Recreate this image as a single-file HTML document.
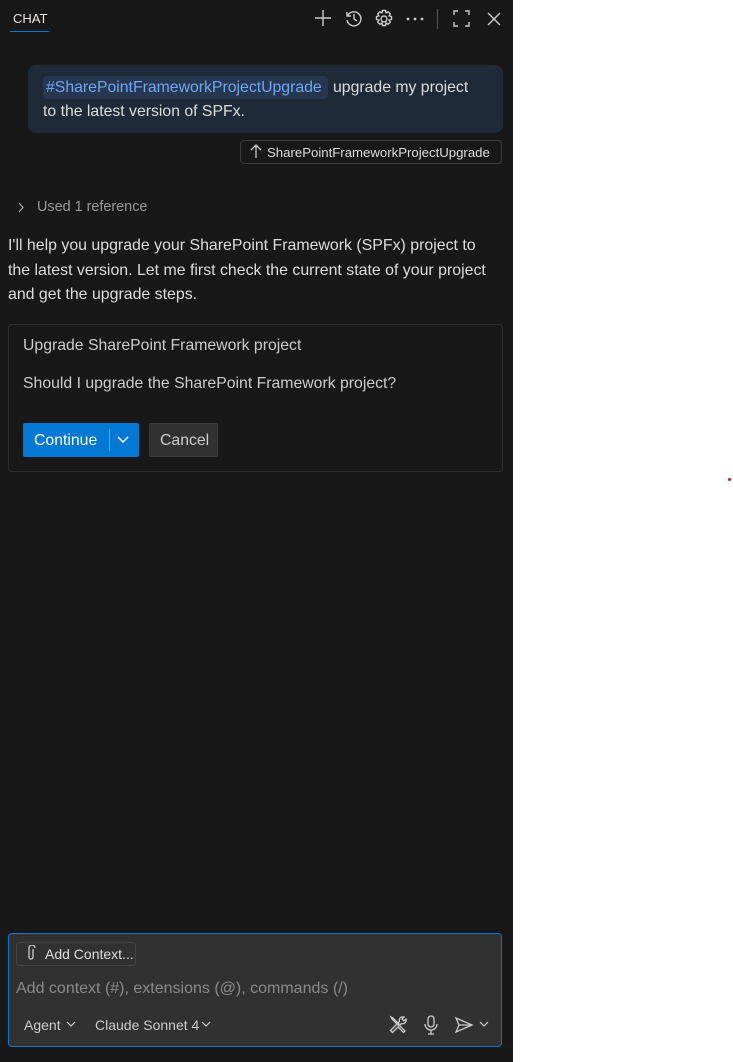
<!DOCTYPE html>
<html><head><style>
*{margin:0;padding:0;box-sizing:border-box}
body{width:733px;height:1062px;background:#fff;position:relative;overflow:hidden;font-family:"Liberation Sans",sans-serif}
#p{position:absolute;left:0;top:0;width:513px;height:1062px;background:#181818;color:#ccc}
.a{position:absolute;white-space:nowrap}
svg{position:absolute}
</style></head><body>
<div id="p">
<div class="a" style="left:13px;top:11px;font-size:13px;color:#e7e7e7">CHAT</div>
<div class="a" style="left:10px;top:31px;width:39px;height:1px;background:#0078d4"></div>
<svg style="left:314px;top:9px" width="18" height="18" viewBox="0 0 18 18" fill="none" stroke="#ccc" stroke-width="1.4"><path d="M9 1v16M1 9h16"/></svg>
<svg style="left:344px;top:9px" width="19" height="19" viewBox="0 0 19 19" fill="none" stroke="#ccc" stroke-width="1.4"><path d="M3 3v4h4"/><path d="M3.5 7A7 7 0 1 1 3 11"/><path d="M10 5v5l3 2"/></svg>
<svg style="left:374px;top:9px" width="20" height="20" viewBox="0 0 20 20" fill="none" stroke="#ccc" stroke-width="1.4"><circle cx="10" cy="10" r="3"/><path d="M8.5 1.5h3l.6 2.4 2-1.1 2.1 2.1-1.1 2 2.4.6v3l-2.4.6 1.1 2-2.1 2.1-2-1.1-.6 2.4h-3l-.6-2.4-2 1.1-2.1-2.1 1.1-2-2.4-.6v-3l2.4-.6-1.1-2 2.1-2.1 2 1.1z"/></svg>
<svg style="left:406px;top:17px" width="18" height="4" viewBox="0 0 18 4" fill="#ccc"><circle cx="2" cy="2" r="1.4"/><circle cx="9" cy="2" r="1.4"/><circle cx="16" cy="2" r="1.4"/></svg>
<div class="a" style="left:437px;top:9px;width:1px;height:20px;background:#555"></div>
<svg style="left:453px;top:10px" width="17" height="17" viewBox="0 0 17 17" fill="none" stroke="#ccc" stroke-width="1.4"><path d="M1 5V1h4M12 1h4v4M16 12v4h-4M5 16H1v-4"/></svg>
<svg style="left:487px;top:12px" width="14" height="14" viewBox="0 0 14 14" fill="none" stroke="#ccc" stroke-width="1.4"><path d="M1 1l12 12M13 1L1 13"/></svg>

<div class="a" style="left:28px;top:65px;width:475px;height:68px;background:#1f2a38;border-radius:8px"></div>
<div class="a" style="left:43px;top:76px;width:285px;height:23px;background:#26374f;border-radius:4px"></div>
<div class="a" style="left:46px;top:79px;font-size:15.8px;color:#6ea7f5">#SharePointFrameworkProjectUpgrade</div>
<div class="a" style="left:333px;top:79px;font-size:15.8px;color:#ddd">upgrade my project</div>
<div class="a" style="left:43px;top:103px;font-size:15.8px;color:#ddd">to the latest version of SPFx.</div>
<div class="a" style="left:240px;top:140px;width:262px;height:24px;border:1px solid #3c3c3c;border-radius:4px"></div>
<svg style="left:249px;top:144px" width="14" height="15" viewBox="0 0 14 15" fill="none" stroke="#ccc" stroke-width="1.3"><path d="M7 14V1M2 6l5-5 5 5"/></svg>
<div class="a" style="left:267px;top:145px;font-size:13.2px;color:#ddd">SharePointFrameworkProjectUpgrade</div>

<svg style="left:17px;top:202px" width="8" height="11" viewBox="0 0 8 11" fill="none" stroke="#aaa" stroke-width="1.2"><path d="M2 1l4 4.5L2 10"/></svg>
<div class="a" style="left:37px;top:199px;font-size:14.4px;color:#999">Used 1 reference</div>
<div class="a" style="left:8px;top:234px;font-size:15.9px;color:#ddd;line-height:24.5px">I'll help you upgrade your SharePoint Framework (SPFx) project to<br>the latest version. Let me first check the current state of your project<br>and get the upgrade steps.</div>

<div class="a" style="left:8px;top:324px;width:495px;height:148px;border:1px solid #2e2e2e;border-radius:4px"></div>
<div class="a" style="left:23px;top:337px;font-size:15.8px;color:#ccc">Upgrade SharePoint Framework project</div>
<div class="a" style="left:23px;top:375px;font-size:15.8px;color:#ccc">Should I upgrade the SharePoint Framework project?</div>
<div class="a" style="left:23px;top:423px;width:116px;height:34px;background:#0078d4;border-radius:2px"></div>
<div class="a" style="left:34px;top:432px;font-size:15.8px;color:#fff">Continue</div>
<div class="a" style="left:109px;top:429px;width:1px;height:22px;background:#5aa0e0"></div>
<svg style="left:116px;top:435px" width="14" height="9" viewBox="0 0 14 9" fill="none" stroke="#fff" stroke-width="1.5"><path d="M2 2l5 5 5-5"/></svg>
<div class="a" style="left:149px;top:423px;width:69px;height:34px;background:#313131;border:1px solid #3a3a3a;border-radius:2px"></div>
<div class="a" style="left:160px;top:432px;font-size:15.8px;color:#ccc">Cancel</div>

<div class="a" style="left:8px;top:933px;width:494px;height:114px;background:#313131;border:1px solid #0078d4;border-radius:4px"></div>
<div class="a" style="left:16px;top:942px;width:120px;height:24px;border:1px solid #444;border-radius:4px"></div>
<svg style="left:26px;top:945px" width="10" height="17" viewBox="0 0 10 17" fill="none" stroke="#ccc" stroke-width="1.3"><path d="M7 4v8a2 2 0 0 1-4 0V3a3 3 0 0 1 6 0"/></svg>
<div class="a" style="left:45px;top:946px;font-size:14px;color:#ddd">Add Context...</div>
<div class="a" style="left:16px;top:980px;font-size:16px;color:#8a8a8a">Add context (#), extensions (@), commands (/)</div>
<div class="a" style="left:24px;top:1017px;font-size:14px;color:#ccc">Agent</div>
<svg style="left:66px;top:1021px" width="10" height="7" viewBox="0 0 10 7" fill="none" stroke="#ccc" stroke-width="1.2"><path d="M1 1l4 4 4-4"/></svg>
<div class="a" style="left:95px;top:1017px;font-size:14px;color:#ccc">Claude Sonnet 4</div>
<svg style="left:201px;top:1021px" width="10" height="7" viewBox="0 0 10 7" fill="none" stroke="#ccc" stroke-width="1.2"><path d="M1 1l4 4 4-4"/></svg>
<svg style="left:389px;top:1015px" width="19" height="19" viewBox="0 0 19 19" fill="none" stroke="#ccc" stroke-width="1.3"><path d="M2 2l2 1 6 6-1 1-6-6z"/><path d="M11 11l5 5-1.5 1.5-5-5"/><path d="M17 4a3.5 3.5 0 0 1-4.5 4.5L3.5 17.5 1.5 15.5l9-9A3.5 3.5 0 0 1 15 2l-2 2 2 2z"/></svg>
<svg style="left:424px;top:1015px" width="14" height="20" viewBox="0 0 14 20" fill="none" stroke="#ccc" stroke-width="1.3"><rect x="4" y="1" width="6" height="11" rx="3"/><path d="M1 9a6 6 0 0 0 12 0M7 15v4M4 19h6"/></svg>
<svg style="left:454px;top:1016px" width="20" height="18" viewBox="0 0 20 18" fill="none" stroke="#ccc" stroke-width="1.3"><path d="M2 2l16 7-16 7 3-7z M5 9h13"/></svg>
<svg style="left:479px;top:1021px" width="10" height="7" viewBox="0 0 10 7" fill="none" stroke="#ccc" stroke-width="1.2"><path d="M1 1l4 4 4-4"/></svg>
</div>
<div class="a" style="left:728px;top:478px;width:3px;height:3px;background:#e01010;border-radius:50%"></div>
</body></html>
